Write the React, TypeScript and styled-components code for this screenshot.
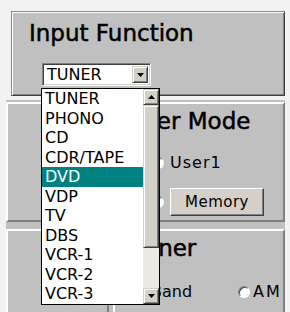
import styled, { createGlobalStyle } from 'styled-components';

const GlobalStyle = createGlobalStyle`
  html, body { margin: 0; padding: 0; }
  body {
    background: #f2f2f2;
    font-family: 'DejaVu Sans', sans-serif;
    color: #000;
  }
`;

const Screen = styled.div`
  position: relative;
  width: 290px;
  height: 312px;
  overflow: hidden;
  padding-top: 11px;
  box-sizing: border-box;
`;

const GroupPanel = styled.div`
  margin: 0 5px 0 11px;
  height: 85px;
  box-sizing: border-box;
  background: #c0c0c0;
  border: 1px solid;
  border-color: #8a8a8a #404040 #404040 #8a8a8a;
  box-shadow: inset 1px 1px #fff, inset -1px -1px #808080;
  padding-top: 8px;
`;

const Title = styled.div<{ $indent: number }>`
  margin-left: ${(p) => p.$indent}px;
  font-size: 23px;
  line-height: 27px;
  white-space: nowrap;
  -webkit-text-stroke: 0.5px #000;
`;

const Combo = styled.div`
  margin: 16px 0 0 30px;
  width: 109px;
  height: 23px;
  box-sizing: border-box;
  display: flex;
  align-items: center;
  background: #fff;
  border: 1px solid;
  border-color: #808080 #fff #fff #808080;
  box-shadow: inset 1px 1px #404040, inset -1px -1px #d4d0c8;
  padding: 2px 2px 2px 4px;
  font-size: 16px;
`;

const ComboText = styled.span`
  flex: 1;
  line-height: 19px;
`;

const ArrowButton = styled.div<{ $w?: number; $h?: number }>`
  width: ${(p) => p.$w ?? 16}px;
  height: ${(p) => p.$h ?? 16}px;
  box-sizing: border-box;
  flex: none;
  display: flex;
  align-items: center;
  justify-content: center;
  background: #d4d0c8;
  border: 1px solid;
  border-color: #d4d0c8 #404040 #404040 #d4d0c8;
  box-shadow: inset 1px 1px #fff, inset -1px -1px #808080;
`;

const Lower = styled.div`
  margin: 4px 5px 0 6px;
  padding-top: 2px;
  background: #c0c0c0;
  display: grid;
  grid-template-columns: 103px 1fr;
  grid-template-rows: 120px 90px;
  column-gap: 4px;
  row-gap: 7px;
`;

const Cell = styled.div`
  box-sizing: border-box;
  border-top: 2px solid #fff;
  border-left: 2px solid #fff;
  border-bottom: 2px solid #808080;
  border-right: 2px solid #808080;
  padding-top: 4px;
  font-size: 16px;
`;

const OptionRow = styled.div<{ $top: number; $h: number; $left?: number }>`
  display: flex;
  align-items: center;
  margin-top: ${(p) => p.$top}px;
  padding-left: ${(p) => p.$left ?? 37}px;
  height: ${(p) => p.$h}px;
  white-space: nowrap;
`;

const Radio = styled.span`
  width: 12px;
  height: 12px;
  box-sizing: border-box;
  flex: none;
  border-radius: 50%;
  background: #fff;
  border: 1px solid;
  border-color: #808080 #fff #fff #808080;
  box-shadow: inset 1px 1px #404040;
`;

const RadioLabel = styled.span<{ $gap: number; $spacing: number }>`
  margin-left: ${(p) => p.$gap}px;
  letter-spacing: ${(p) => p.$spacing}px;
`;

const Button = styled.div`
  margin-left: 6px;
  width: 94px;
  height: 28px;
  box-sizing: border-box;
  display: flex;
  align-items: center;
  justify-content: center;
  background: #d4d0c8;
  border: 1px solid;
  border-color: #fff #404040 #404040 #fff;
  box-shadow: inset -1px -1px #808080;
  font-size: 15px;
  letter-spacing: 0.5px;
`;

const BandLabel = styled.span`
  width: 87px;
  flex: none;
`;

const ListBox = styled.div`
  position: absolute;
  left: 41px;
  top: 88px;
  width: 119px;
  height: 217px;
  box-sizing: border-box;
  border: 1px solid #000;
  background: #fff;
  display: flex;
`;

const Items = styled.div`
  flex: 1;
  display: flex;
  flex-direction: column;
`;

const Item = styled.div<{ $selected?: boolean }>`
  height: 19.55px;
  line-height: 19.55px;
  padding-left: 3px;
  font-size: 16px;
  white-space: nowrap;
  background: ${(p) => (p.$selected ? '#008080' : 'transparent')};
  color: ${(p) => (p.$selected ? '#fff' : '#000')};
`;

const ScrollBar = styled.div`
  width: 16px;
  display: flex;
  flex-direction: column;
  background: #ebe9e3;
`;

const Thumb = styled.div`
  height: 143px;
  box-sizing: border-box;
  background: #d4d0c8;
  border: 1px solid;
  border-color: #d4d0c8 #404040 #404040 #d4d0c8;
  box-shadow: inset 1px 1px #fff, inset -1px -1px #808080;
`;

const Track = styled.div`
  flex: 1;
`;

function Tri({ up }: { up?: boolean }) {
  return (
    <svg width="7" height="4" viewBox="0 0 7 4">
      <path d={up ? 'M3.5 0 L7 4 L0 4 Z' : 'M0 0 L7 0 L3.5 4 Z'} fill="#000" />
    </svg>
  );
}

const inputs = ['TUNER', 'PHONO', 'CD', 'CDR/TAPE', 'DVD', 'VDP', 'TV', 'DBS', 'VCR-1', 'VCR-2', 'VCR-3'];

export default function App() {
  return (
    <>
      <GlobalStyle />
      <Screen>
        <GroupPanel>
          <Title $indent={17}>Input Function</Title>
          <Combo>
            <ComboText>TUNER</ComboText>
            <ArrowButton $w={16} $h={17}>
              <Tri />
            </ArrowButton>
          </Combo>
        </GroupPanel>

        <Lower>
          <Cell />
          <Cell>
            <Title $indent={13}>User Mode</Title>
            <OptionRow $top={18} $h={19}>
              <Radio />
              <RadioLabel $gap={6} $spacing={1}>User1</RadioLabel>
            </OptionRow>
            <OptionRow $top={16} $h={28}>
              <Radio />
              <Button>Memory</Button>
            </OptionRow>
          </Cell>
          <Cell />
          <Cell>
            <Title $indent={18}>Tuner</Title>
            <OptionRow $top={20} $h={19} $left={36}>
              <BandLabel>Band</BandLabel>
              <Radio />
              <RadioLabel $gap={3} $spacing={2}>AM</RadioLabel>
            </OptionRow>
          </Cell>
        </Lower>

        <ListBox>
          <Items>
            {inputs.map((name) => (
              <Item key={name} $selected={name === 'DVD'}>
                {name}
              </Item>
            ))}
          </Items>
          <ScrollBar>
            <ArrowButton>
              <Tri up />
            </ArrowButton>
            <Thumb />
            <Track />
            <ArrowButton>
              <Tri />
            </ArrowButton>
          </ScrollBar>
        </ListBox>
      </Screen>
    </>
  );
}
